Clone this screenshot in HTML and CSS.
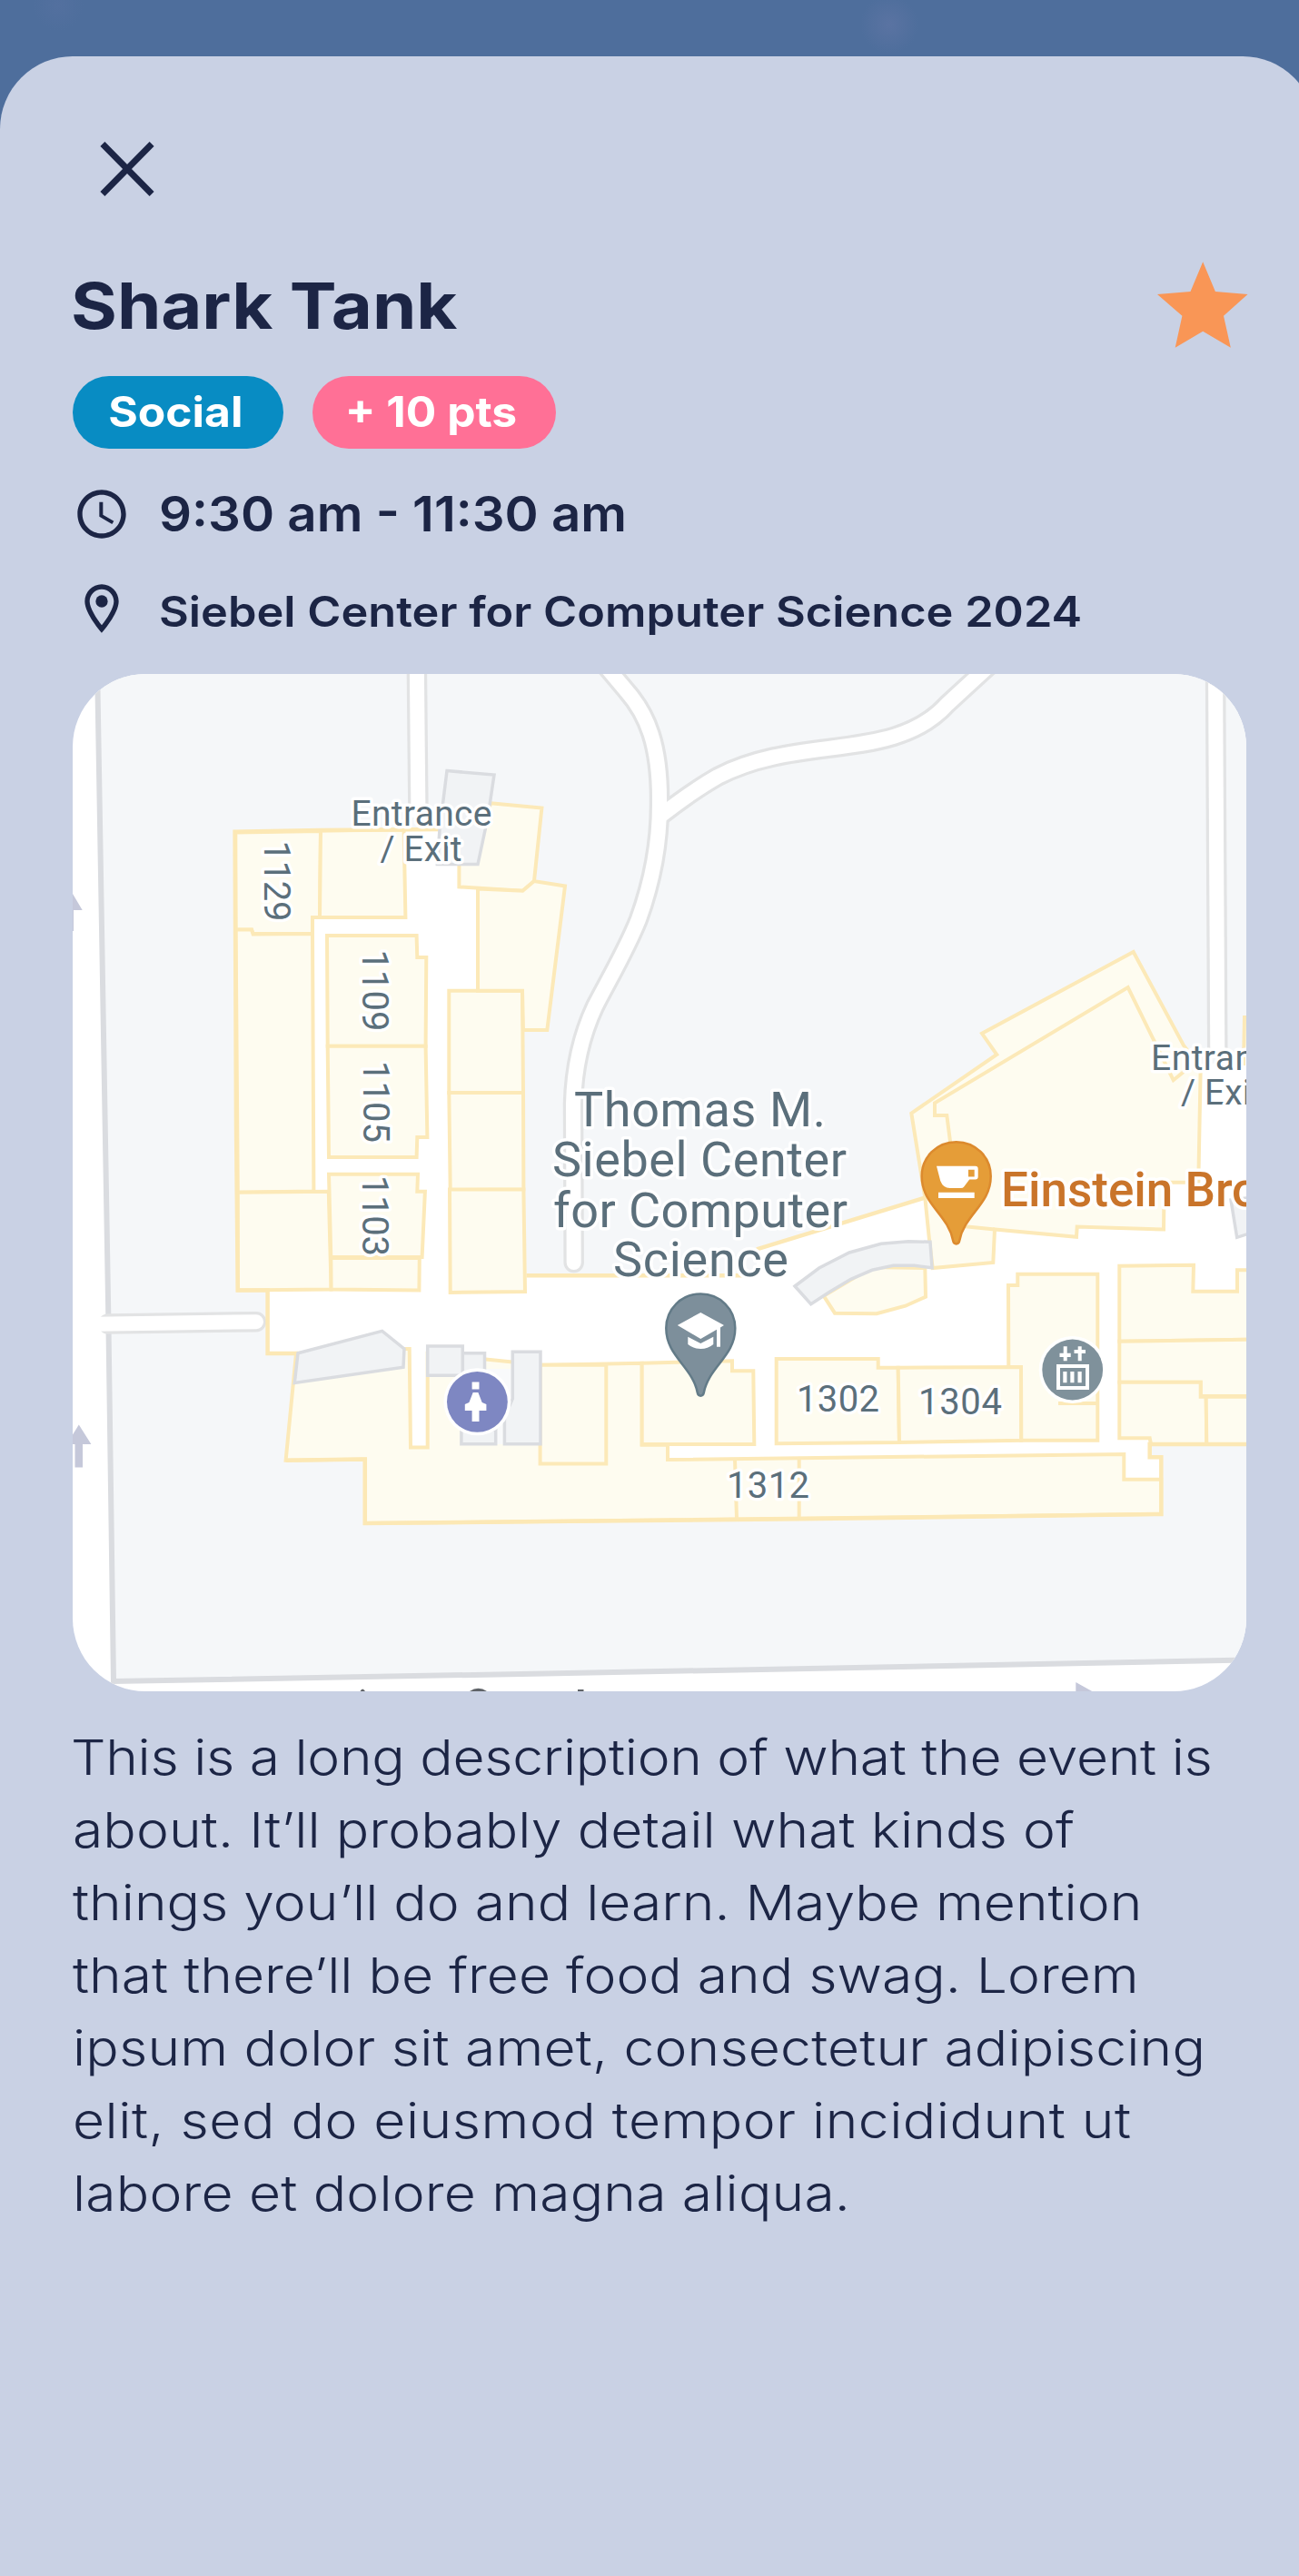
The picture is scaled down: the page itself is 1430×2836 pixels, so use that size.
FILE: index.html
```html
<!DOCTYPE html>
<html lang="en">
<head>
<meta charset="utf-8">
<title>Shark Tank</title>
<link rel="stylesheet" href="styles.css">
</head>
<body>
<main class="sheet">
  <button class="close" aria-label="Close">
    <svg width="60" height="60" viewBox="0 0 60 60"><path d="M2.9 2.5l54.2 55M57.1 2.5l-54.2 55"/></svg>
  </button>

  <header class="heading">
    <h1 class="title"><span class="wide">Shark Tank</span></h1>
    <svg class="star" width="100" height="96" viewBox="0 0 100 96"><path d="M50.2 .3L63.9 33l35.6 3L73 59.7l7.8 35L50.2 76.7l-30.5 18 7.7-35L0 36l36.5-3z"/></svg>
  </header>

  <div class="tags">
    <span class="tag tag-social"><span class="wide">Social</span></span>
    <span class="tag tag-points"><span class="wide">+ 10 pts</span></span>
  </div>

  <div class="detail detail-time">
    <svg class="icon" viewBox="0 0 24 24"><path d="M11.99 2C6.47 2 2 6.48 2 12s4.47 10 9.99 10C17.52 22 22 17.52 22 12S17.52 2 11.99 2zM12 20c-4.42 0-8-3.58-8-8s3.58-8 8-8 8 3.58 8 8-3.58 8-8 8zm.5-13H11v6l5.25 3.15.75-1.23-4.5-2.67z"/></svg>
    <span class="wide">9:30 am - 11:30 am</span>
  </div>
  <div class="detail detail-place">
    <svg class="icon" viewBox="0 0 24 24"><path d="M12 2C8.13 2 5 5.13 5 9c0 5.25 7 13 7 13s7-7.75 7-13c0-3.87-3.13-7-7-7zM7 9c0-2.76 2.24-5 5-5s5 2.24 5 5c0 2.88-2.88 7.19-5 9.88C9.92 16.21 7 11.85 7 9z"/><circle cx="12" cy="9" r="2.5"/></svg>
    <span class="wide">Siebel Center for Computer Science 2024</span>
  </div>

  <svg class="map" viewBox="80 742 1292 1120">
    <defs>
      <path id="pin" d="M0-37.8C-21.5-37.8-38-21-38 0c0 31 29 42 34.5 71 .9 4.500 6.100 4.500 7 0C9 42 38 31 38 0 38-21 21.500-37.800 0-37.800z"/>
    </defs>

    <!-- grounds and streets -->
    <path class="ground" d="M107 730L119.300 1448 125 1851 600 1842.500 1080 1833.300 1400 1827V730z"/>
    <g class="casing">
      <path d="M119 1457.500L282 1455.200" stroke-linecap="round"/>
      <path d="M458.800 730L460.500 900"/>
      <path d="M1338 730L1340.300 1165"/>
      <path d="M664 730L690 761C712 786 727 820 726 886C726 925 720 965 703 1012C690 1045 672 1075 655 1108C640 1140 632 1175 631 1215L631.700 1390" stroke-linecap="round"/>
      <path d="M726 899Q762 871 790 855C880 808 985 840 1043 775L1092 730"/>
    </g>
    <g class="street">
      <path d="M105 1457.700L282 1455.200" stroke-linecap="round"/>
      <path d="M458.800 730L460.500 900"/>
      <path d="M1338 730L1340.300 1165"/>
      <path d="M664 730L690 761C712 786 727 820 726 886C726 925 720 965 703 1012C690 1045 672 1075 655 1108C640 1140 632 1175 631 1215L631.700 1390" stroke-linecap="round"/>
      <path d="M726 899Q762 871 790 855C880 808 985 840 1043 775L1092 730"/>
    </g>

    <!-- building floor -->
    <path class="floor" d="M258.600 915.700L353 914 485 913 492 848.600 544 853 540 884 596.400 889.600 588.600 968 622.300 975.500 602.300 1133.500 576 1134.300 577 1280 579.600 1404H833V1375.400L1018 1318.600 1003.300 1225.600 1097.300 1161 1081 1137.800 1247.700 1048 1303 1151 1321 1171 1369 1170 1370 1118H1400V1590H1267L1265.700 1604.300H1278.300V1667L880 1672.300 600 1675 401.800 1677V1606.500L314.600 1607.800 326 1490H294.600V1420.400H261.800L260 1240z"/>

    <!-- rooms -->
    <g class="room">
      <path d="M259.300 916.400L353 915 352 1010H344V1028H278.600L277 1023.600H259.600z"/>
      <path d="M353 914.500L444.600 913.600 446.400 1010H352z"/>
      <path d="M259.600 1023.600H277L278.600 1028.600 344 1028 345.400 1311.400 261.800 1312.700z"/>
      <path d="M261.800 1312.700L361.800 1311.800 364.600 1419.600 261.800 1420.400z"/>
      <path d="M360 1030H458.600L459.300 1054H469.300L468.600 1151.800H360.700z"/>
      <path d="M360.700 1151.800H468.600L470.400 1252H459.300L458.600 1274H362z"/>
      <path d="M362 1292.700L460 1292.700 459.300 1311.800H467.900L464.600 1384H364.300z"/>
      <path d="M364.300 1385H461.800L461.400 1420.400 364.600 1419.600z"/>
      <path d="M494.300 1090.700H575L576 1203H494.300z"/>
      <path d="M494.300 1203H576L576.400 1309.400 495.700 1310z"/>
      <path d="M495 1309.400H576.400L578 1422 495.700 1423z"/>
      <path d="M540 884.300L596.400 889.600 588 970 575.400 980.700 505.400 976.400V940H526z"/>
      <path d="M526 978.600L575.400 980.700 588 970 622 975.500 602.300 1134H576L575 1090.700H526z"/>
      <path d="M326 1490L314.600 1607.800 401.800 1606.500V1677L600 1675 1278.300 1667V1628.700H1237.300V1601L735 1607V1590.700H706.700V1500.700L600 1502.700H595.700L470.700 1490V1593.500H452L450.700 1484.900H440z"/>
      <path d="M594.600 1502.700H667.300V1611.500H594.600z"/>
      <path d="M706.700 1500.700L806 1498.300V1509.300H829.300L830.300 1590H706.700z"/>
      <path d="M854.700 1496H966.700V1505.700H988.700L990 1588 854.700 1589.300z"/>
      <path d="M988.700 1505.700L1124 1505 1124.300 1585.700 990 1588z"/>
      <path d="M1110 1415H1120.300V1402.700H1208.300V1585.700H1124.300L1124 1505H1110.300z"/>
      <path d="M1165 1545H1208.300"/>
      <path d="M1232.300 1393.700L1314 1392.700 1313.300 1421.700H1362V1398.300H1400V1474.500L1232.300 1476.700z"/>
      <path d="M1232.300 1476.700L1400 1474.500V1537H1321.700V1521.700H1232.300z"/>
      <path d="M1232.300 1521.700H1321.700V1537.700H1327.700L1328.300 1590H1267L1265.700 1583.300H1232.300z"/>
      <path d="M1327.700 1537.700H1400V1590H1328.300z"/>
      <path d="M1003.300 1225.600L1097.300 1161 1081 1137.800 1247.700 1048 1303 1151 1321.700 1175 1319.300 1301.700H1281.700L1281 1353.500 1185.700 1350.600 1185 1361.800 1095 1353.500 1093.300 1390 1026.700 1396 1023 1364.700 1018.300 1318.600z"/>
      <path d="M1046.700 1262L1042.300 1228H1029V1214.400L1241.700 1087 1291.700 1189.200 1303 1180M1060 1350L1095 1353.500"/>
      <path d="M906.700 1426.700L919 1445.700 965 1446.300 996.700 1437.700 1019 1427.700 1018.300 1396 960 1395z"/>
      <path d="M1353 1171H1369L1370 1120H1400"/>
      <path d="M809 1606.700L811 1671.700M879.700 1605.700V1671.700"/>
    </g>
    <path class="outline" d="M485 913L353 914 258.600 915.700 260 1240 261.800 1420.400H294.600V1490H328M314.600 1607.800L401.800 1606.500V1677L600 1675 880 1672.300 1278.300 1667V1604.300H1265.700V1590H1400M579.600 1404.300H833M833 1375.400L1018 1318.600"/>

    <!-- stairs and service areas -->
    <path class="gap" d="M534 1507H568V1590H534z"/>
    <g class="service">
      <path d="M492 848.600L544 853 537 900 526 951.500H481.400L484 913z"/>
      <path d="M328 1489.800L420.700 1465.300 445 1485 444 1505.300 324.300 1522.400z"/>
      <path d="M509.300 1489.800H533.500V1514H509.300z"/>
      <path d="M470.700 1482H509.300V1514.300H470.700z"/>
      <path d="M564.300 1488.200H595V1589.800H555.400V1560L564.300 1540z"/>
      <path d="M507.900 1574H545.700V1589.800H507.900z"/>
      <path d="M875 1416L901.700 1396 935 1379 970 1369.300 1000 1366.700 1024 1367.300 1026 1395.700 1006.700 1393.300H983.300L960 1398.300 936.700 1408.300 913.300 1422.300 892.700 1435.700z"/>
      <path d="M1355 1321L1361.700 1362.300 1400 1350V1316z"/>
    </g>

    <!-- one-way arrows -->
    <path class="arrow" d="M80 984L90.700 1002H81V1025H70V984zM86.800 1568.600L100.400 1590H91V1615.500H82.500V1590H73.600zM1184.300 1852L1204 1863H1184.300z"/>

    <!-- labels -->
    <g class="label room-no">
      <text x="877" y="1554.300" textLength="91">1302</text>
      <text x="1011" y="1556.700" textLength="92">1304</text>
      <text x="800" y="1649" textLength="91">1312</text>
      <text transform="translate(291.400 925.500) rotate(90)" textLength="89">1129</text>
      <text transform="translate(399.300 1045.500) rotate(90)" textLength="90">1109</text>
      <text transform="translate(400.400 1168) rotate(90)" textLength="90">1105</text>
      <text transform="translate(399.300 1294) rotate(90)" textLength="89">1103</text>
    </g>
    <g class="label door">
      <text x="386.500" y="909.300" textLength="155">Entrance</text>
      <text x="418.500" y="947.900" textLength="90">/ Exit</text>
      <text x="1267" y="1178" textLength="156">Entrance</text>
      <text x="1300" y="1215.900" textLength="90">/ Exit</text>
    </g>
    <g class="label place">
      <text x="632" y="1239.500" textLength="277">Thomas M.</text>
      <text x="608" y="1294.900" textLength="324">Siebel Center</text>
      <text x="609" y="1350.600" textLength="324">for Computer</text>
      <text x="675" y="1405" textLength="193">Science</text>
    </g>
    <text class="label cafe" x="1102" y="1328">Einstein Bros</text>

    <!-- markers -->
    <g transform="translate(771.300 1462.300)">
      <use href="#pin" class="pin-school"/>
      <path class="glyph" d="M-25.500-3.300L0-17.300 25.700-3.300 21.700-.8V20.400H17.700V1.500L0 11.700zM-14 9.400L0 16.700 14 9.400V17.700Q8 22.700 0 22.700T-14 17.700z"/>
    </g>
    <g transform="translate(1052.700 1295)">
      <use href="#pin" class="pin-cafe"/>
      <path class="glyph" fill-rule="evenodd" d="M-21.700-11.300H21Q24-11.300 24-8V.5Q24 3.500 21 3.500H14.500L8.500 11.500Q7.500 13 5 13H-7Q-14.500 13-17.500 5zM13.300-7.300V.4H20V-7.300zM-19.700 17.800H20V24H-19.700z"/>
    </g>
    <g transform="translate(525.400 1543.300)">
      <circle r="37" fill="#fff"/><circle r="33.400" class="dot-restroom"/>
      <path class="glyph" d="M-5.800-21.700H2.100V-13.900H-5.800zM-4.700-10.300H1L5.300.7 10 2.700V9.700H2.100V21.700H-5.800V9.700H-13.600V2.700L-9 .7z"/>
    </g>
    <g transform="translate(1180.700 1508)">
      <circle r="37" fill="#fff"/><circle r="33.400" class="dot-lift"/>
      <path class="glyph" fill-rule="evenodd" d="M-17.700-6H18.300V22H-17.700zM-13.700-2V18H14.300V-2z"/>
      <path class="glyph" d="M-10.400 2h4.200v12.300h-4.200zM-2.400 2h4.200v12.300h-4.200zM5.800 2h4.200v12.300h-4.200zM-10-25.700h4v7.400h4v4.200h-4v4.400h-4v-4.400h-4.200v-4.200h4.200zM6-25.700h4v3.700h4.300v4h-4.300v8.300h-4v-8.300h-4.200v-4h4.200z"/>
    </g>
    <path class="road-name" d="M396.500 1862q2.500-5 5.500 0zM517 1862q9.500-6.500 19 0zM636 1862v-2h6.500v2z"/>
  </svg>

  <p class="description">
    <span class="line line-1">This is a long description of what the event is</span>
    <span class="line line-2">about. It’ll probably detail what kinds of</span>
    <span class="line line-3">things you’ll do and learn. Maybe mention</span>
    <span class="line line-4">that there’ll be free food and swag. Lorem</span>
    <span class="line line-5">ipsum dolor sit amet, consectetur adipiscing</span>
    <span class="line line-6">elit, sed do eiusmod tempor incididunt ut</span>
    <span class="line line-7">labore et dolore magna aliqua.</span>
  </p>
</main>
</body>
</html>
```
FILE: styles.css
```css
* { box-sizing: border-box; }

body {
  margin: 0;
  padding-top: 62px;
  height: 2836px;
  overflow: hidden;
  color: #1c2545;
  font-family: Inter, "Open Sans", sans-serif;
  background:
    radial-gradient(circle at 979px 27px, #5a73a2 0, rgba(90, 115, 162, 0) 32px),
    radial-gradient(circle at 64px 6px, #53709f 0, rgba(83, 112, 159, 0) 28px),
    #4e6e9c;
}

/* The sheet runs past the right edge of the screen. */
.sheet {
  width: 1448px;
  height: 2774px;
  padding: 94px 76px 0 80px;
  border-radius: 80px 80px 0 0;
  background: #c9d1e4;
}

.wide {
  display: inline-block;
  white-space: nowrap;
  transform-origin: 0 50%;
}

.close {
  display: block;
  margin: 0 0 0 30px;
  padding: 0;
  border: 0;
  background: none;
}
.close svg { display: block; fill: none; stroke: #1c2545; stroke-width: 7; }

.heading {
  display: flex;
  justify-content: space-between;
  align-items: flex-start;
  width: 1294px;
  margin-top: 72px;
}
.title { margin: 6.5px 0 0 -2px; font-size: 70px; font-weight: 700; line-height: 84px; }
.title .wide { transform: scaleX(1.11); }
.star { display: block; fill: #f99656; }

.tags { display: flex; gap: 32px; margin-top: 30px; }
.tag {
  display: flex;
  justify-content: center;
  height: 80px;
  padding-right: 5px;
  border-radius: 40px;
  color: #fff;
  font-size: 46.5px;
  font-weight: 700;
  line-height: 79px;
}
.tag .wide { transform-origin: 50% 50%; }
.tag-social { width: 232px; background: #088cc3; }
.tag-social .wide { transform: scaleX(1.07); }
.tag-points { width: 268px; padding-right: 7px; background: #ff7096; }
.tag-points .wide { transform: scaleX(1.07); }

.detail { display: flex; gap: 31px; height: 64px; font-weight: 600; line-height: 64px; }
.icon { width: 64px; height: 64px; fill: #1c2545; }
.detail-time { margin-top: 40px; font-size: 54px; }
.detail-time .wide { transform: scaleX(1.044); }
.detail-place { margin-top: 40px; font-size: 46.5px; }
.detail-place .wide { padding-top: 3px; transform: scaleX(1.086); }

.map {
  display: block;
  width: 1292px;
  height: 1120px;
  margin-top: 40px;
  border-radius: 80px;
  background: #fff;
}
.ground { fill: #f5f7f9; stroke: #dadce0; stroke-width: 6; }
.casing { fill: none; stroke: #e2e3e4; stroke-width: 22.500; }
.street { fill: none; stroke: #fff; stroke-width: 16; }
.floor { fill: #fff; }
.room { fill: #fefcf0; stroke: #fce9b8; stroke-width: 4; }
.outline { fill: none; stroke: #fce8b5; stroke-width: 4.500; }
.service { fill: #f1f3f5; stroke: #dadce0; stroke-width: 3.500; }
.gap { fill: #f9fafb; }
.arrow { fill: #c5c8da; }
.label {
  fill: #5b6f7b;
  stroke: #fff;
  stroke-width: 7;
  stroke-linejoin: round;
  paint-order: stroke;
  font-family: Roboto, sans-serif;
}
.room-no { font-size: 40px; }
.door { font-size: 39px; }
.place { font-size: 54px; }
.cafe { fill: #c9742a; font-size: 53px; font-weight: 500; }
.pin-school { fill: #7d8f9b; stroke: #637b88; stroke-width: 2.500; }
.pin-cafe { fill: #e59d38; stroke: #dc8a2e; stroke-width: 2.500; }
.dot-restroom { fill: #7e87c2; }
.dot-lift { fill: #7f919b; }
.glyph { fill: #fff; }
.road-name { fill: #5f6368; }

.description {
  margin: 33px 0 0;
  font-size: 54px;
  font-weight: 300;
  line-height: 80px;
}
.line {
  display: block;
  width: max-content;
  white-space: nowrap;
  transform: scaleX(1.122);
  transform-origin: 0 50%;
}
.line-1 { margin-left: -2px; letter-spacing: -0.26px; }
.line-2 { letter-spacing: 0.08px; }
.line-3 { letter-spacing: 0; }
.line-5 { letter-spacing: 0.15px; }
.line-6 { letter-spacing: 0.44px; }
.line-7 { letter-spacing: 0.15px; }
```
